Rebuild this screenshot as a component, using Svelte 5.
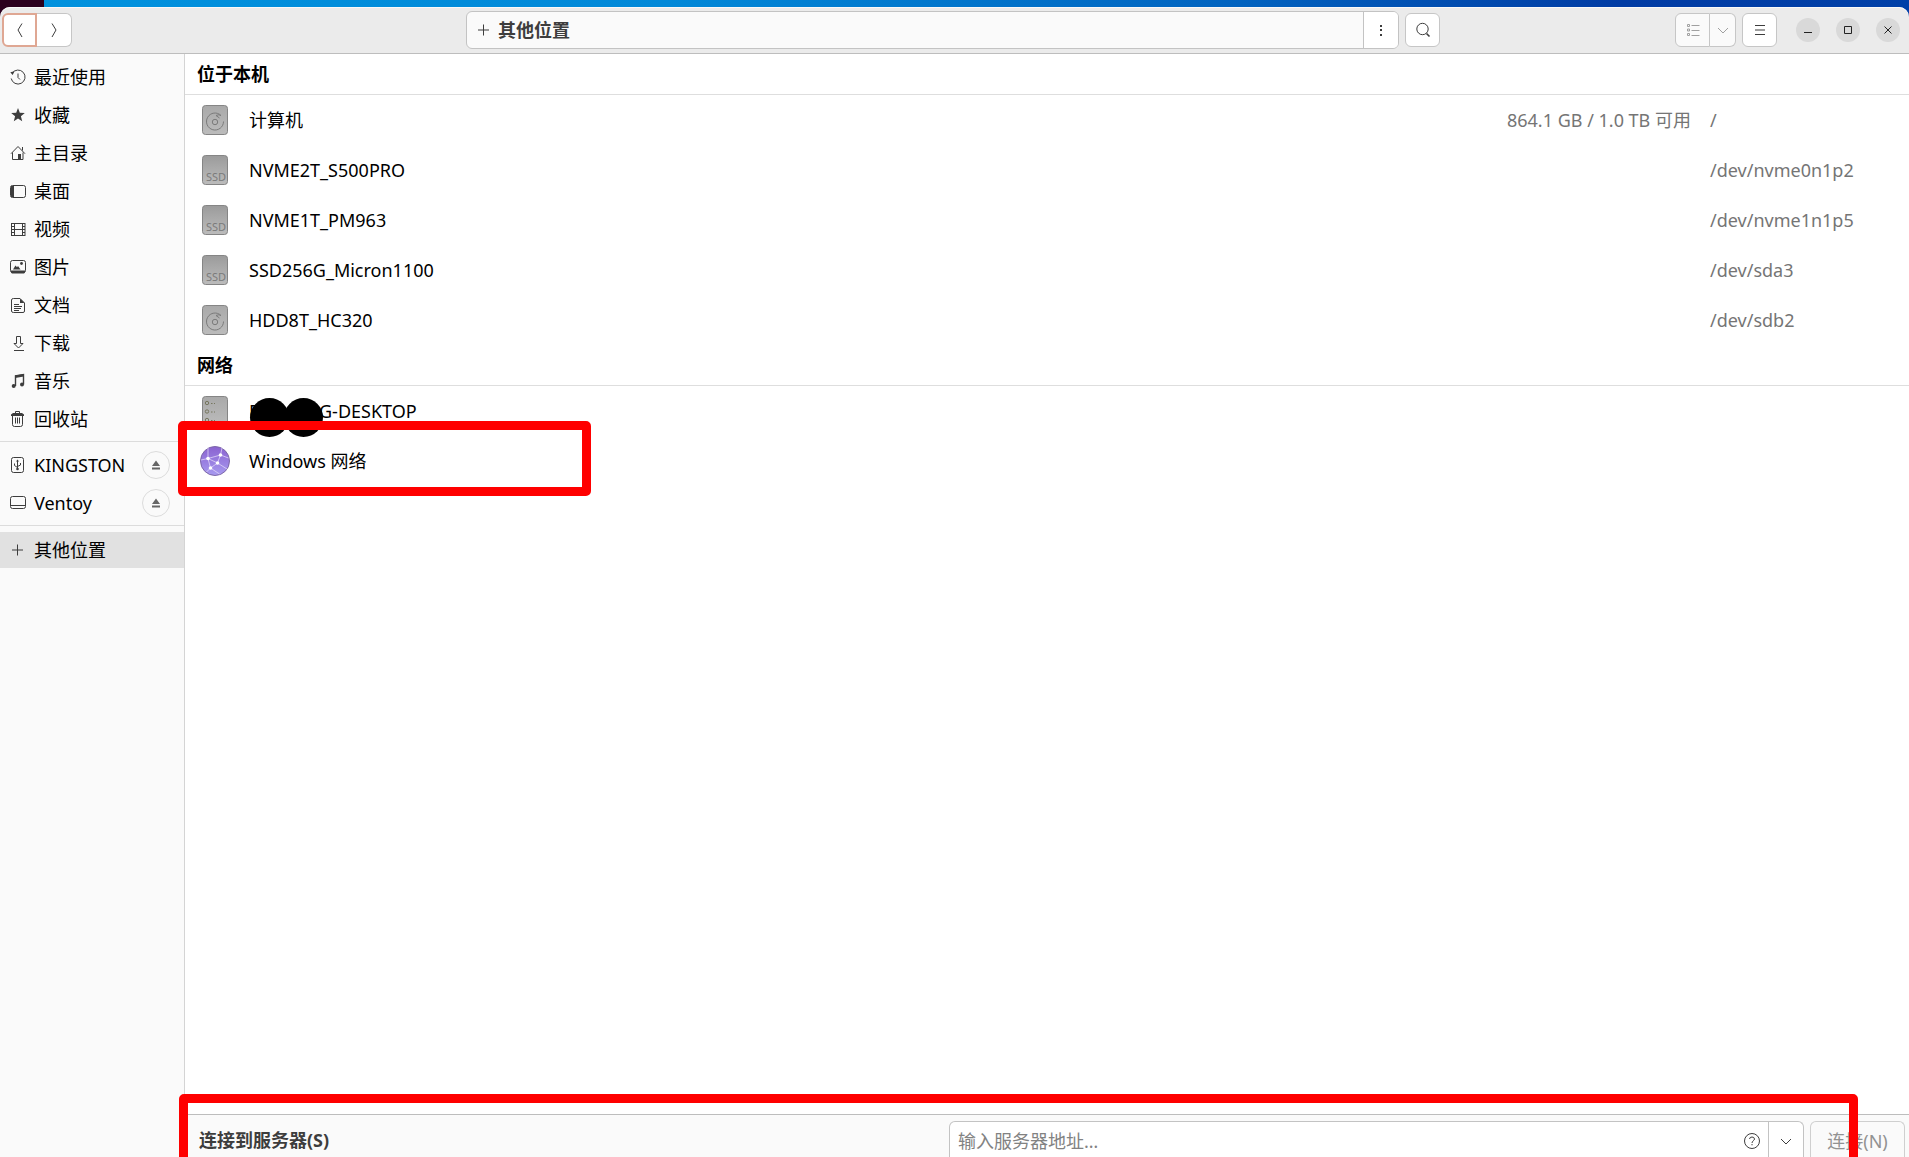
<script lang="ts">
  type Place = { icon: string; label: string };
  type Volume = { kind: "hdd" | "ssd"; name: string; space?: string; path: string };

  const places: Place[] = [
    { icon: "recent", label: "最近使用" },
    { icon: "star", label: "收藏" },
    { icon: "home", label: "主目录" },
    { icon: "desktop", label: "桌面" },
    { icon: "video", label: "视频" },
    { icon: "picture", label: "图片" },
    { icon: "document", label: "文档" },
    { icon: "download", label: "下载" },
    { icon: "music", label: "音乐" },
    { icon: "trash", label: "回收站" },
  ];

  const devices: Place[] = [
    { icon: "usb", label: "KINGSTON" },
    { icon: "drive", label: "Ventoy" },
  ];

  const volumes: Volume[] = [
    { kind: "hdd", name: "计算机", space: "864.1 GB / 1.0 TB 可用", path: "/" },
    { kind: "ssd", name: "NVME2T_S500PRO", path: "/dev/nvme0n1p2" },
    { kind: "ssd", name: "NVME1T_PM963", path: "/dev/nvme1n1p5" },
    { kind: "ssd", name: "SSD256G_Micron1100", path: "/dev/sda3" },
    { kind: "hdd", name: "HDD8T_HC320", path: "/dev/sdb2" },
  ];

  let address = $state("");
</script>

{#snippet icon(name: string)}
  <svg class="icon" viewBox="0 0 16 16" width="16" height="16" aria-hidden="true">
    {#if name === "recent"}
      <path d="M2.2 4.2A7 7 0 1 1 1.2 9.5M8 4.5V8.5L10 10.5" />
      <path class="fill" d="M.3 3.2 4.6 2.2 2.6 6z" />
    {:else if name === "star"}
      <path class="fill" d="M8 1l1.8 4.8 5 .2-3.9 3.2 1.3 5L8 11.4l-4.2 2.8 1.3-5L1.2 6l5-.2z" />
    {:else if name === "home"}
      <path d="M1 8.7 8 1.500l7 7.200M2.500 7.500v7h10.500v-7M12.500 2v3.500" />
      <path class="fill" d="M8 9h3v5.500H8z" />
    {:else if name === "desktop"}
      <rect x=".5" y="2.5" width="15" height="12" rx="2" />
      <path class="fill" d="M1 3h3v11H1z" />
    {:else if name === "video"}
      <path d="M1.5 2v13M4.5 2v13M12.5 2v13M15 2v13M4.5 2.500h8M4.500 8.500h8M4.500 14.500h8" />
      <path d="M3 2v13M14 2v13" stroke-dasharray="1 2" stroke-width="2" />
    {:else if name === "picture"}
      <rect x=".5" y="1.5" width="15" height="12" rx="2" />
      <path class="fill" d="M1 11.5h14v2l-1 1H2l-1-1zM3 10.5l2.5-4L7 8.200l1-1.200 2.500 3.500z" />
      <circle class="fill" cx="11.5" cy="4.5" r="1.4" />
    {:else if name === "document"}
      <path d="M3.5 1.5H10l4.5 4.5v8q0 1.500-1.500 1.500H3.500Q1.500 15.500 1.500 14V3q0-1.500 2-1.500zM4 7.500h5M4 9.500h8M4 11.500h7M4 13.500h5" />
      <path class="fill" d="M10 1.5v4.5h4.5z" />
    {:else if name === "download"}
      <path d="M6.5 1.5h4v7h2.5l-4.5 4.5L4 8.5h2.5zM4 15.500h10" />
    {:else if name === "music"}
      <path d="M5.5 13V2.800l8-1.300v10" stroke-width="1.4" />
      <path class="fill" d="M5 2.5l9-1.5v2.5L5 5z" />
      <circle class="fill" cx="3.7" cy="13" r="2" />
      <circle class="fill" cx="12" cy="11.5" r="2" />
    {:else if name === "trash"}
      <path d="M2.5 5v8.500q0 2 2 2h6q2 0 2-2V5M5.500 6.500v6M7.500 6.500v6M9.500 6.500v6M5.500 2.500v-2h4v2" />
      <path class="fill" d="M1 3.5 3 2h9l2 1.500V5H1z" />
    {:else if name === "usb"}
      <rect x="1.5" y=".5" width="12" height="15" rx="2" />
      <path d="M7.5 3v10M4.5 6.5v2l3 2M10.5 6v2l-3 1.500" />
      <path class="fill" d="M6 4.5 7.5 2.5 9 4.5z" />
      <circle class="fill" cx="7.5" cy="12" r="1.3" />
    {:else if name === "drive"}
      <rect x=".5" y="1.5" width="15" height="12" rx="2" />
      <path d="M1 10.5h14" />
    {:else if name === "plus"}
      <path d="M7.5 2.500v11M2 8h11" />
    {:else if name === "eject"}
      <path class="fill" d="M8 3.5 12 9H4zM4 10.5h8v2H4z" />
    {:else if name === "back"}
      <path d="M10 1.5 6 8l4 7" />
    {:else if name === "forward"}
      <path d="M6 1.5 10 8l-4 7" />
    {:else if name === "more"}
      <path class="fill" d="M7 3h2v2H7zM7 7h2v2H7zM7 12h2v2H7z" />
    {:else if name === "search"}
      <circle cx="7.5" cy="7" r="5.7" />
      <path d="M11.5 11.5l3 3" stroke-width="1.6" />
    {:else if name === "list"}
      <path d="M2.5 2.5h2v2h-2zM2.5 7h2v2h-2zM2.5 11.5h2v2h-2zM6.5 3.500h8M6.500 8.500h8M6.500 13.500h8" />
    {:else if name === "down"}
      <path d="M3 6l5 5 5-5" />
    {:else if name === "menu"}
      <path d="M3 3.5h10M3 8h10M3 12.5h10" />
    {:else if name === "minimize"}
      <path d="M4 10.5h8" />
    {:else if name === "maximize"}
      <path d="M4.5 4.5h7v7h-7z" />
    {:else if name === "close"}
      <path d="M4.5 4.5l7 7M11.5 4.5l-7 7" />
    {:else if name === "help"}
      <circle cx="8" cy="8" r="7.5" />
      <path d="M5.5 6q.2-2 2.5-2t2.5 2c0 1.5-2.5 2-2.5 4M8 11v1.3" />
    {/if}
  </svg>
{/snippet}

{#snippet deviceIcon(kind: string)}
  <svg class="device" viewBox="0 0 30 30" width="30" height="30" aria-hidden="true">
    <defs>
      <linearGradient id="metal-{kind}" x2="0" y2="1">
        <stop offset="0" stop-color={kind === "ssd" ? "#9b9b9b" : "#a9a9a9"} />
        <stop offset="1" stop-color="#bcbcbc" />
      </linearGradient>
      <linearGradient id="globe-{kind}" x2="0" y2="1">
        <stop offset="0" stop-color="#8a62d0" />
        <stop offset="1" stop-color="#a79af0" />
      </linearGradient>
    </defs>
    {#if kind === "globe"}
      <circle cx="15" cy="15" r="14.5" fill="url(#globe-{kind})" stroke="#7d68a8" />
      <path
        d="M8 1.5v11L1 14M8 12.5 20.5 9 22 2M20.5 9l8 3M8 12.5 17.5 17 20.5 9M17.5 17 10.5 22 8 12.5M10.5 22l-4 4M10.5 22l9 6M17.5 17 27 23"
        fill="none"
        stroke="#e0d4f8"
        stroke-width=".8"
      />
      <g fill="#fff">
        <circle cx="8" cy="12.5" r="1.8" />
        <circle cx="20.5" cy="9" r="1.8" />
        <circle cx="17.5" cy="17" r="1.8" />
        <circle cx="10.5" cy="22" r="1.8" />
      </g>
    {:else}
      <rect x="2.5" y=".5" width="25" height="29" rx="3" fill="url(#metal-{kind})" stroke="#858585" />
      {#if kind === "hdd"}
        <g fill="none" stroke="#7b7b7b">
          <path d="M21 10.500A8.500 8.500 0 1 0 23.500 16.500M21 10.500q-2-1.500-5 0M16 10.500l3.500 2.500" />
          <circle cx="15" cy="17" r="2.7" />
        </g>
      {:else if kind === "ssd"}
        <text x="6" y="26">SSD</text>
      {:else}
        <g fill="none" stroke="#77775f">
          <circle cx="7" cy="7" r="1.7" />
          <circle cx="7" cy="15.5" r="1.7" />
          <circle cx="7" cy="24" r="1.7" />
          <path d="M11 7.5h1.5M14 7.5h1M11 16h1.5M14 16h1M11 24.5h1.5M14 24.5h1" />
        </g>
      {/if}
    {/if}
  </svg>
{/snippet}

<div class="screen">
  <div class="wallpaper">
    <header>
      <div class="nav linked">
        <button class="focused" aria-label="后退">{@render icon("back")}</button>
        <button aria-label="前进">{@render icon("forward")}</button>
      </div>
      <div class="location">
        <div class="pathbar">
          <button class="crumb">{@render icon("plus")}其他位置</button>
          <button class="more" aria-label="更多">{@render icon("more")}</button>
        </div>
        <button class="single" aria-label="搜索">{@render icon("search")}</button>
      </div>
      <div class="tools">
        <div class="linked view">
          <button disabled aria-label="列表视图">{@render icon("list")}</button>
          <button disabled class="narrow" aria-label="视图选项">{@render icon("down")}</button>
        </div>
        <button class="single" aria-label="菜单">{@render icon("menu")}</button>
        <div class="controls">
          <button aria-label="最小化">{@render icon("minimize")}</button>
          <button aria-label="最大化">{@render icon("maximize")}</button>
          <button aria-label="关闭">{@render icon("close")}</button>
        </div>
      </div>
    </header>
  </div>

  <div class="body">
    <nav class="sidebar">
      <ul>
        {#each places as place}
          <li><a href="#{place.icon}">{@render icon(place.icon)}{place.label}</a></li>
        {/each}
      </ul>
      <ul>
        {#each devices as device}
          <li>
            <a href="#{device.icon}">{@render icon(device.icon)}{device.label}</a>
            <button class="eject" aria-label="弹出">{@render icon("eject")}</button>
          </li>
        {/each}
      </ul>
      <ul>
        <li class="selected"><a href="#other">{@render icon("plus")}其他位置</a></li>
      </ul>
    </nav>

    <main>
      <h2>位于本机</h2>
      <ul class="list">
        {#each volumes as volume}
          <li>
            {@render deviceIcon(volume.kind)}
            <span class="name">{volume.name}</span>
            <span class="space">{volume.space ?? ""}</span>
            <span class="path">{volume.path}</span>
          </li>
        {/each}
      </ul>
      <h2>网络</h2>
      <ul class="list">
        <li>
          {@render deviceIcon("server")}
          <span class="name"><span class="masked">E</span>G-DESKTOP</span>
          <i class="blot first"></i>
          <i class="blot second"></i>
        </li>
        <li>
          {@render deviceIcon("globe")}
          <span class="name">Windows 网络</span>
          <div class="mark row-mark"></div>
        </li>
      </ul>

      <form class="connect" onsubmit={(e) => e.preventDefault()}>
        <label for="address">连接到服务器(S)</label>
        <div class="entry">
          <input id="address" type="text" placeholder="输入服务器地址…" bind:value={address} />
          <button type="button" class="help" aria-label="帮助">{@render icon("help")}</button>
          <button type="button" class="drop" aria-label="最近的服务器">{@render icon("down")}</button>
        </div>
        <button class="submit" disabled={!address}>连接(N)</button>
      </form>
      <div class="mark bar-mark"></div>
    </main>
  </div>
</div>

<style>
  :global(body) {
    overflow: hidden;
  }

  .screen {
    display: flex;
    flex-direction: column;
    height: 100vh;
    font-family: "Noto Sans", "Noto Sans CJK SC", sans-serif;
    font-size: 18px;
    line-height: 24px;
    color: #000;
    background: #fff;
  }

  .screen *,
  .screen {
    box-sizing: border-box;
  }

  ul {
    list-style: none;
    margin: 0;
    padding: 0;
  }

  button {
    display: flex;
    align-items: center;
    justify-content: center;
    margin: 0;
    padding: 0;
    border: 0;
    background: none;
    font: inherit;
    color: #3d3d3d;
  }

  .icon {
    flex: none;
    fill: none;
    stroke: currentColor;
  }

  .icon .fill {
    fill: currentColor;
    stroke: none;
  }

  .wallpaper {
    flex: none;
    padding-top: 7px;
    background:
      linear-gradient(#2c001e, #2c001e) 0 0 / 44px 100% no-repeat,
      linear-gradient(90deg, #0092de, #0088d8 35%, #0062bf 65%, #003ba4 85%, #0040a8);
  }

  header {
    display: grid;
    grid-template-columns: 466fr 974fr 469fr;
    align-items: center;
    height: 47px;
    padding-bottom: 1px;
    background: #ebebeb;
    border-bottom: 1px solid #bdbdbd;
    border-radius: 10px 10px 0 0;
    box-shadow: inset 0 1px #f9f9f9;
  }

  .linked {
    display: flex;
  }

  .linked button,
  .single {
    width: 35px;
    height: 34px;
    background: #fff;
    border: 1px solid #c6c6c6;
  }

  .single {
    border-radius: 6px;
  }

  .linked button:first-child {
    border-radius: 6px 0 0 6px;
  }

  .linked button:last-child {
    border-radius: 0 6px 6px 0;
    border-left-width: 0;
  }

  .nav {
    padding-left: 2px;
  }

  .nav .focused {
    border: 2px solid #dfa793;
  }

  .location {
    display: flex;
    align-items: center;
    gap: 6px;
  }

  .pathbar {
    flex: 1;
    display: flex;
    height: 38px;
    background: #fafafa;
    border: 1px solid #c3c3c3;
    border-radius: 6px;
    overflow: hidden;
  }

  .crumb {
    flex: 1;
    justify-content: flex-start;
    gap: 6px;
    padding-left: 9px;
    font-weight: 700;
  }

  .more {
    width: 35px;
    background: #fff;
    border-left: 1px solid #c3c3c3;
  }

  .tools {
    display: flex;
    align-items: center;
    justify-content: flex-end;
    gap: 6px;
    padding-right: 9px;
  }

  .view button {
    color: #a0a0a0;
    background: #fafafa;
  }

  .linked .narrow {
    width: 26px;
  }

  .controls {
    display: flex;
    gap: 16px;
    margin-left: 13px;
  }

  .controls button {
    width: 24px;
    height: 24px;
    border-radius: 50%;
    background: #d9d9d9;
    color: #222;
  }

  .body {
    flex: 1;
    display: flex;
    min-height: 0;
  }

  .sidebar {
    flex: none;
    width: 185px;
    background: #fafafa;
    border-right: 1px solid #d4d4d4;
  }

  .sidebar ul {
    display: flex;
    flex-direction: column;
    gap: 2px;
    padding: 5px 0 4px;
  }

  .sidebar ul + ul {
    border-top: 1px solid #dcdcdc;
  }

  .sidebar ul:last-child {
    padding-top: 6px;
  }

  .sidebar li {
    display: flex;
    align-items: center;
    height: 36px;
    padding-right: 14px;
  }

  .sidebar .selected {
    background: #e1e1e1;
  }

  .sidebar a {
    flex: 1;
    display: flex;
    align-items: center;
    gap: 8px;
    padding-left: 10px;
    color: #000;
    text-decoration: none;
  }

  .sidebar .icon {
    color: #3d3d3d;
  }

  .eject {
    width: 28px;
    height: 28px;
    border: 1px solid #dcdcdc;
    border-radius: 50%;
  }

  .sidebar .eject .icon {
    color: #666;
  }

  main {
    position: relative;
    flex: 1;
    display: flex;
    flex-direction: column;
    min-width: 0;
    background: #fff;
  }

  h2 {
    margin: 0;
    padding: 8px 12px;
    border-bottom: 1px solid #dedede;
    font-size: 18px;
    font-weight: 700;
  }

  .list li {
    position: relative;
    display: flex;
    align-items: center;
    height: 50px;
    padding-left: 15px;
  }

  .device {
    flex: none;
    margin-right: 19px;
  }

  .device text {
    font-family: "Noto Sans", sans-serif;
    font-size: 11px;
    fill: #7b7b7b;
  }

  .name {
    flex: 1;
  }

  .space,
  .path {
    color: #757575;
  }

  .path {
    width: 199px;
    margin-left: 19px;
  }

  .masked {
    display: inline-block;
    width: 70px;
  }

  /* hand-drawn annotations lying over the list */
  .blot {
    position: absolute;
    top: 12px;
    width: 39px;
    height: 39px;
    border-radius: 50%;
    background: #000;
  }

  .first {
    left: 65px;
  }

  .second {
    left: 99px;
  }

  .mark {
    position: absolute;
    border: 9px solid #f00;
    border-radius: 5px;
    pointer-events: none;
  }

  .row-mark {
    top: -15px;
    left: -7px;
    width: 413px;
    height: 75px;
  }

  .bar-mark {
    bottom: -20px;
    left: -6px;
    right: 51px;
    height: 83px;
  }

  .connect {
    display: grid;
    grid-template-columns: 744fr 855fr 95px;
    gap: 6px;
    height: 43px;
    margin-top: auto;
    padding: 6px 4px 0 14px;
    background: #fafafa;
    border-top: 1px solid #bdbdbd;
    overflow: hidden;
  }

  .connect label {
    padding-top: 7px;
    font-weight: 700;
    color: #3d3d3d;
  }

  .entry {
    display: flex;
    height: 38px;
    background: #fff;
    border: 1px solid #c3c3c3;
    border-bottom: 0;
    border-radius: 6px 6px 0 0;
  }

  .entry input {
    flex: 1;
    min-width: 0;
    padding: 0 8px;
    border: 0;
    outline: 0;
    background: none;
    font: inherit;
  }

  .entry input::placeholder {
    color: #828282;
    opacity: 1;
  }

  .help {
    width: 32px;
  }

  .drop {
    width: 35px;
    border-left: 1px solid #c3c3c3;
  }

  .submit {
    height: 38px;
    border: 1px solid #cfcfcf;
    border-bottom: 0;
    border-radius: 6px 6px 0 0;
    color: #929292;
  }
</style>
